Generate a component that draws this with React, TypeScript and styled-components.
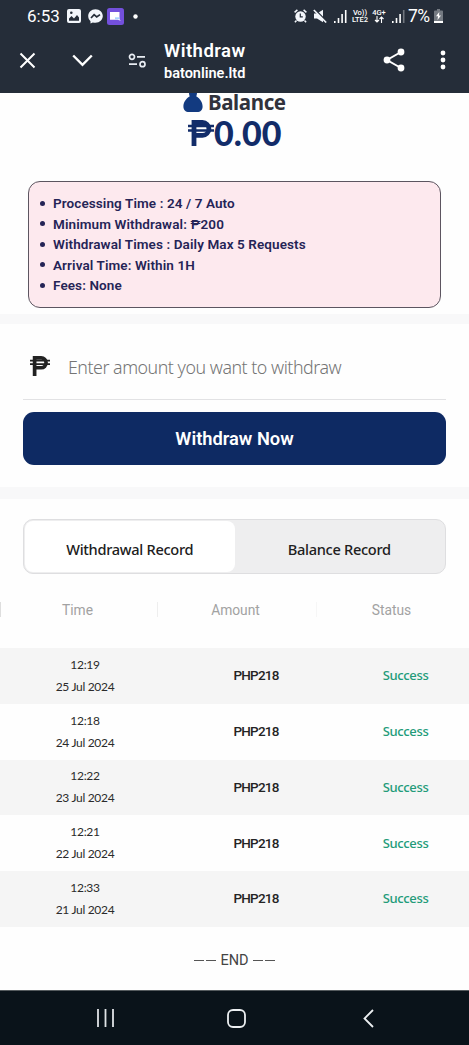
import React from 'react';
import styled, { createGlobalStyle } from 'styled-components';

const Global = createGlobalStyle`
  * { box-sizing: border-box; }
  body { margin: 0; background: #fff; font-family: Roboto, "Liberation Sans", sans-serif; }
  svg { display: block; flex: none; }
`;

const Screen = styled.div`
  width: 469px;
  height: 1045px;
  display: flex;
  flex-direction: column;
  overflow: hidden;
  background: #fefefe;
`;

const Header = styled.header`
  flex: none;
  height: 93px;
  background: #252d39;
  color: #fff;
`;

const StatusBar = styled.div`
  height: 32px;
  display: flex;
  align-items: center;
  padding-left: 27px;
`;

const Clock = styled.span`
  width: 40px;
  font-size: 17px;
  line-height: 20px;
  white-space: nowrap;
`;

const Glyph = styled.svg<{ $gap?: number }>`
  margin-left: ${(p) => p.$gap ?? 0}px;
`;

const Carrier = styled.div<{ $gap: number; $width: number }>`
  margin-left: ${(p) => p.$gap}px;
  width: ${(p) => p.$width}px;
  font-size: 7.5px;
  line-height: 7px;
  font-weight: 500;
  text-align: center;
  white-space: nowrap;
`;

const Battery = styled.span`
  margin-left: 3px;
  width: 25px;
  font-size: 17.5px;
  line-height: 20px;
  letter-spacing: -0.6px;
`;

const Toolbar = styled.div`
  height: 56px;
  display: flex;
  align-items: center;
  padding-left: 19px;
`;

const PageInfo = styled.div`
  margin-left: 17px;
  width: 219px;
  padding-top: 4px;
`;

const PageTitle = styled.div`
  font-size: 18.5px;
  line-height: 23px;
  font-weight: 600;
  letter-spacing: 0.45px;
`;

const PageHost = styled.div`
  font-size: 14.5px;
  line-height: 21px;
  font-weight: 600;
`;

const BalancePanel = styled.section`
  flex: none;
  height: 221px;
  padding: 0 28px;
`;

const BalanceHeading = styled.div`
  display: flex;
  align-items: flex-start;
  height: 22px;
  padding-left: 155px;
`;

const BalanceLabel = styled.span`
  margin-left: 5px;
  margin-top: -1px;
  font: 700 20.5px/20px "Noto Sans", sans-serif;
  color: #30323c;
  letter-spacing: -0.4px;
`;

const BalanceValue = styled.div`
  display: flex;
  align-items: center;
  padding-left: 160px;
  height: 36px;
  color: #122c69;
  font: 900 34px/30px Lato, sans-serif;
  letter-spacing: 0.1px;
`;

const Rules = styled.ul`
  margin: 30px 0 0;
  height: 127px;
  padding: 11px 0 0 24px;
  border: 1px solid #5c5560;
  border-radius: 12px;
  background: #fde9ee;
  list-style: none;
`;

const Rule = styled.li`
  display: flex;
  align-items: center;
  height: 20.5px;
  margin-left: -13px;
  font-size: 13.5px;
  letter-spacing: 0.1px;
  font-weight: 600;
  color: #252456;
  white-space: nowrap;

  &::before {
    content: '';
    width: 5px;
    height: 5px;
    margin-right: 8px;
    border-radius: 50%;
    background: currentColor;
  }
`;

const Band = styled.div<{ $height: number }>`
  flex: none;
  height: ${(p) => p.$height}px;
  background: #f8f8f9;
`;

const Form = styled.section`
  flex: none;
  height: 163px;
  padding: 0 23px;
`;

const AmountField = styled.div`
  height: 76px;
  display: flex;
  align-items: center;
  padding: 9px 0 0 7px;
  border-bottom: 1px solid #e2e2e4;
`;

const Placeholder = styled.span`
  margin-left: 18px;
  margin-top: 1px;
  font: 300 17.8px/24px "Noto Sans", "Open Sans", sans-serif;
  letter-spacing: -0.47px;
  color: #757575;
  white-space: nowrap;
`;

const Submit = styled.button`
  display: block;
  width: 423px;
  height: 53px;
  margin-top: 12px;
  padding: 0;
  border: 0;
  border-radius: 11px;
  background: #0e2a63;
  color: #fff;
  font: 600 18.3px/53px Roboto, sans-serif;
`;

const Tabs = styled.div`
  flex: none;
  display: flex;
  width: 423px;
  height: 55px;
  margin: 20px 23px 0;
  padding: 1px;
  border: 1.5px solid #dedee0;
  border-radius: 10px;
  background: #eeeeef;
`;

const Tab = styled.div<{ $active?: boolean }>`
  flex: 1;
  display: flex;
  align-items: center;
  justify-content: center;
  padding-top: 5px;
  border-radius: 8px;
  background: ${(p) => (p.$active ? '#fff' : 'transparent')};
  color: #202020;
  font: 500 14.6px/20px "Noto Sans", sans-serif;
  letter-spacing: -0.3px;
`;

const Columns = styled.div`
  flex: none;
  display: grid;
  grid-template-columns: 157px 159px 153px;
  height: 74px;
  padding-top: 28px;
  align-items: start;
`;

const Column = styled.div<{ $tone: string }>`
  height: 15px;
  padding-right: 3px;
  border-left: 1px solid ${(p) => p.$tone};
  color: #a2a2a2;
  font-size: 13.8px;
  line-height: 16px;
  text-align: center;
`;

const Row = styled.div<{ $shaded: boolean }>`
  flex: none;
  display: grid;
  grid-template-columns: 170px 172px 127px;
  align-items: center;
  height: 55.8px;
  background: ${(p) => (p.$shaded ? '#f5f5f5' : '#fefefe')};
  text-align: center;
`;

const When = styled.div`
  font: 400 12px/22px Lato, sans-serif;
  letter-spacing: -0.3px;
  color: #2b2b2b;
`;

const Amount = styled.div`
  padding-bottom: 1.5px;
  font-size: 13.5px;
  letter-spacing: -0.8px;
  font-weight: 500;
  color: #242424;
`;

const Status = styled.div`
  padding-bottom: 1.5px;
  font: 500 13px/20px "Noto Sans", sans-serif;
  letter-spacing: -0.35px;
  color: #239b79;
`;

const End = styled.div`
  flex: 1;
  display: flex;
  align-items: center;
  justify-content: center;
  gap: 4px;
  padding-top: 5px;
  font-size: 14.5px;
  color: #444;
`;

const Dashes = styled.span`
  display: flex;
  gap: 2px;

  &::before,
  &::after {
    content: '';
    width: 10px;
    height: 1px;
    background: #555;
  }
`;

const NavBar = styled.nav`
  flex: none;
  height: 55px;
  display: flex;
  align-items: center;
  padding-left: 96px;
  border-top: 1px solid #555b5e;
  background: #0a131a;
`;

const Peso = ({ size, color }: { size: number; color: string }) => (
  <svg width={size} height={size} viewBox="0 0 26 26" fill="none" stroke={color}>
    <path d="M6 26V2.500h8.500a6.200 6.200 0 0 1 0 12.800H6" strokeWidth="4.800" />
    <path d="M0 6h26M0 10.500h26" strokeWidth="2.300" />
  </svg>
);

const Signal = ({ gap, weak }: { gap: number; weak?: boolean }) => (
  <Glyph $gap={gap} width="13" height="13" viewBox="0 0 13 13" fill="#fff">
    <path d="M0 11h1.6v2H0zM3.7 8h1.6v5H3.7zM7.3 4h1.6v9H7.3z" />
    <path d="M10.9 0h1.6v13h-1.6z" opacity={weak ? 0.35 : 1} />
  </Glyph>
);

const records = [
  ['12:19', '25 Jul 2024'],
  ['12:18', '24 Jul 2024'],
  ['12:22', '23 Jul 2024'],
  ['12:21', '22 Jul 2024'],
  ['12:33', '21 Jul 2024'],
];

export default function App() {
  return (
    <>
      <Global />
      <Screen>
        <Header>
          <StatusBar>
            <Clock>6:53</Clock>
            <Glyph width="14" height="14" viewBox="0 0 14 14">
              <rect width="14" height="14" rx="2" fill="#f3f6fb" />
              <path d="M2 11.800V9.500L4.500 7l2.500 2.500L10 6l2 2.500v3.300z" fill="#252d39" />
              <circle cx="4.300" cy="3.800" r="1.300" fill="#252d39" />
            </Glyph>
            <Glyph $gap={7} width="15" height="15" viewBox="0 0 15 15">
              <path d="M7.500.3C3.300.3.200 3.300.200 7.100c0 2.100.9 3.900 2.300 5.100v2.400l2.300-1.200c.9.3 1.700.4 2.700.4 4.200 0 7.300-3 7.300-6.700S11.700.3 7.500.3z" fill="#f3f6fb" />
              <path d="m3 9 3.100-3.300L8.700 8 12 5.600" fill="none" stroke="#252d39" strokeWidth="1.700" />
            </Glyph>
            <Glyph $gap={4} width="17" height="17" viewBox="0 0 17 17">
              <rect width="17" height="17" rx="2.500" fill="#7350dc" />
              <path d="M3 4h9.500v7l1.200 1.800-3-1H3z" fill="#fff" />
              <path d="M8 9.300h4.500v2H8z" fill="#a9d3ff" />
            </Glyph>
            <Glyph $gap={9} width="5" height="5" viewBox="0 0 5 5">
              <circle cx="2.500" cy="2.500" r="2.200" fill="#fff" />
            </Glyph>
            <Glyph $gap={156} width="13" height="14" viewBox="0 0 13 14">
              <circle cx="6.500" cy="7.500" r="5.200" fill="#f3f6fb" />
              <path d="M.6 3.400 3.400.9M12.400 3.400 9.600.9M2.500 11.500.9 13.300M10.500 11.500l1.600 1.800" stroke="#f3f6fb" strokeWidth="1.500" />
              <path d="M6.300 4.500v3.300h2.500" fill="none" stroke="#252d39" strokeWidth="1.200" />
            </Glyph>
            <Glyph $gap={6} width="14" height="14" viewBox="0 0 14 14">
              <path d="M1 4.500h3L10 .8v12.400L4 9.500H1z" fill="#f3f6fb" />
              <path d="m2 .5 12 12.500" stroke="#252d39" strokeWidth="1.600" />
              <path d="m.8 1 12.400 12.500" stroke="#f3f6fb" strokeWidth="1.600" />
            </Glyph>
            <Signal gap={7} />
            <Carrier $gap={4} $width={18}>Vo))<br />LTE2</Carrier>
            <Carrier $gap={3} $width={14}>
              4G+
              <svg width="14" height="7" viewBox="0 0 14 7" fill="none" stroke="#fff" strokeWidth="1.100">
                <path d="M5 0v6M3 4l2 2 2-2M9.500 7V1M7.500 3l2-2 2 2" />
              </svg>
            </Carrier>
            <Signal gap={6} weak />
            <Battery>7%</Battery>
            <Glyph $gap={1} width="9" height="14" viewBox="0 0 9 14">
              <path d="M3 0h3v1.500h2A1 1 0 0 1 9 2.500V13a1 1 0 0 1-1 1H1a1 1 0 0 1-1-1V2.500a1 1 0 0 1 1-1h2z" fill="#747a82" />
              <path d="M0 12h9v2H0zM5.300 3 2 7.300h2L3.500 11 7 6.500H5z" fill="#fff" />
            </Glyph>
          </StatusBar>
          <Toolbar>
            <Glyph width="17" height="17" viewBox="0 0 17 17" stroke="#fff" strokeWidth="2">
              <path d="m1.500 1.500 14 14M15.500 1.500l-14 14" />
            </Glyph>
            <Glyph $gap={36} width="21" height="13" viewBox="0 0 21 13" fill="none" stroke="#fff" strokeWidth="2.400">
              <path d="m1.200 1.500 9.300 9.300 9.300-9.300" />
            </Glyph>
            <Glyph $gap={35} width="19" height="15" viewBox="0 0 19 15" fill="none" stroke="#e9edf3" strokeWidth="1.700">
              <circle cx="4" cy="3.800" r="2.500" />
              <path d="M9 3.800h8M1 11.200h8" />
              <circle cx="14.500" cy="11.200" r="2.500" />
            </Glyph>
            <PageInfo>
              <PageTitle>Withdraw</PageTitle>
              <PageHost>batonline.ltd</PageHost>
            </PageInfo>
            <Glyph width="22" height="24" viewBox="0 0 22 24" fill="#fff">
              <path d="M18 4 4 12l14 8" fill="none" stroke="#fff" strokeWidth="2" />
              <circle cx="18" cy="4" r="3.400" />
              <circle cx="4" cy="12" r="3.400" />
              <circle cx="18" cy="20" r="3.400" />
            </Glyph>
            <Glyph $gap={35} width="6" height="20" viewBox="0 0 6 20" fill="#fff">
              <circle cx="3" cy="3" r="2.400" />
              <circle cx="3" cy="10" r="2.400" />
              <circle cx="3" cy="17" r="2.400" />
            </Glyph>
          </Toolbar>
        </Header>
        <BalancePanel>
          <BalanceHeading>
            <svg width="20" height="20" viewBox="0 0 20 20">
              <path d="M6 0h8c0 1.500-.6 2.500-.6 3.500C17 5.500 19.600 9.500 19.600 13.500c0 3.500-2 5.500-5.500 5.500H6C2.500 19 .4 17 .4 13.500.4 9.500 3 5.500 6.600 3.500 6.600 2.500 6 1.500 6 0z" fill="#123a80" />
            </svg>
            <BalanceLabel>Balance</BalanceLabel>
          </BalanceHeading>
          <BalanceValue>
            <Peso size={26} color="#122c69" />
            0.00
          </BalanceValue>
          <Rules>
            <Rule>Processing Time : 24 / 7 Auto</Rule>
            <Rule>Minimum Withdrawal: ₱200</Rule>
            <Rule>Withdrawal Times : Daily Max 5 Requests</Rule>
            <Rule>Arrival Time: Within 1H</Rule>
            <Rule>Fees: None</Rule>
          </Rules>
        </BalancePanel>
        <Band $height={10} />
        <Form>
          <AmountField>
            <Peso size={20} color="#222" />
            <Placeholder>Enter amount you want to withdraw</Placeholder>
          </AmountField>
          <Submit>Withdraw Now</Submit>
        </Form>
        <Band $height={12} />
        <Tabs>
          <Tab $active>Withdrawal Record</Tab>
          <Tab>Balance Record</Tab>
        </Tabs>
        <Columns>
          <Column $tone="#dedede">Time</Column>
          <Column $tone="#eee">Amount</Column>
          <Column $tone="#f6f6f6">Status</Column>
        </Columns>
        {records.map(([time, date], i) => (
          <Row key={date} $shaded={i % 2 === 0}>
            <When>
              {time}
              <br />
              {date}
            </When>
            <Amount>PHP218</Amount>
            <Status>Success</Status>
          </Row>
        ))}
        <End>
          <Dashes />
          END
          <Dashes />
        </End>
        <NavBar>
          <svg width="19" height="18" viewBox="0 0 19 18" stroke="#dfe3e6" strokeWidth="1.800">
            <path d="M2 0v18M9.500 0v18M17 0v18" />
          </svg>
          <Glyph $gap={112} width="19" height="19" viewBox="0 0 19 19" fill="none" stroke="#eceff1" strokeWidth="1.800">
            <rect x="1" y="1" width="17" height="17" rx="5" />
          </Glyph>
          <Glyph $gap={117} width="11" height="19" viewBox="0 0 11 19" fill="none" stroke="#eceff1" strokeWidth="1.800">
            <path d="m10 1-8.500 8.500L10 18" />
          </Glyph>
        </NavBar>
      </Screen>
    </>
  );
}
